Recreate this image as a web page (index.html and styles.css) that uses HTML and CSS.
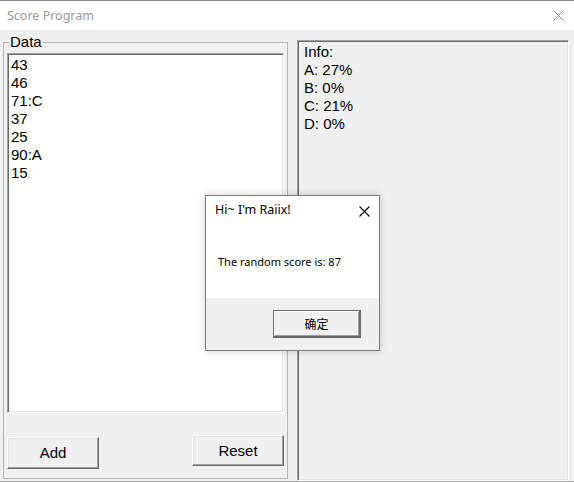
FILE: index.html
```html
<!DOCTYPE html>
<html>
<head>
<meta charset="utf-8">
<title>Score Program</title>
<link rel="stylesheet" href="styles.css">
</head>
<body>
<div class="window">
  <div class="titlebar">
    <span class="title">Score Program</span>
    <svg class="close" width="11" height="11" viewBox="0 0 11 11"><path d="M0.5 0.5 L10.5 10.5 M10.5 0.5 L0.5 10.5" stroke="#8a8a8a" stroke-width="1" fill="none"/></svg>
  </div>
  <div class="content">
    <fieldset class="group">
      <legend class="legend">Data</legend>
      <div class="listbox">
        <div>43</div>
        <div>46</div>
        <div>71:C</div>
        <div>37</div>
        <div>25</div>
        <div>90:A</div>
        <div>15</div>
      </div>
      <div class="buttons">
        <button class="btn btn-add">Add</button>
        <button class="btn btn-reset">Reset</button>
      </div>
    </fieldset>
    <div class="info">
      <div>Info:</div>
      <div>A: 27%</div>
      <div>B: 0%</div>
      <div>C: 21%</div>
      <div>D: 0%</div>
    </div>
  </div>

  <div class="dialog">
    <div class="dialog-main">
      <div class="dialog-title">
        <span>Hi~ I'm Raiix!</span>
        <svg class="dialog-close" width="11" height="11" viewBox="0 0 11 11"><path d="M0.5 0.5 L10.5 10.5 M10.5 0.5 L0.5 10.5" stroke="#000" stroke-width="1.1" fill="none"/></svg>
      </div>
      <div class="dialog-msg">The random score is: 87</div>
    </div>
    <div class="dialog-footer">
      <button class="ok-btn">确定</button>
    </div>
  </div>
</div>
</body>
</html>
```

FILE: styles.css
```css
html, body {
  margin: 0;
  padding: 0;
  width: 574px;
  height: 482px;
  overflow: hidden;
  background: #f0f0f0;
  font-family: "Noto Sans", "Noto Sans CJK SC", sans-serif;
  color: #000;
}

.window {
  position: relative;
  display: flex;
  flex-direction: column;
  height: 482px;
  box-sizing: border-box;
  border-bottom: 1px solid #a8a8a8;
}

.titlebar {
  height: 31px;
  box-sizing: border-box;
  border-top: 1px solid #8a8a8a;
  background: #fff;
  display: flex;
  align-items: center;
  justify-content: space-between;
  padding: 0 10px 0 7px;
}

.title {
  font-size: 12.5px;
  line-height: 17px;
  color: #999;
}

.close {
  display: block;
}

.content {
  flex: 1;
  display: flex;
  align-items: flex-start;
  gap: 9px;
  padding: 3px 0 0 3px;
}

.group {
  margin: 0;
  padding: 0 3px 0 3px;
  width: 285px;
  height: 446px;
  box-sizing: border-box;
  border: 1px solid #b4b4b4;
  min-width: 0;
}

.legend {
  padding: 0 1px;
  margin-left: 2px;
  font-family: "Liberation Sans", sans-serif;
  font-size: 15px;
  line-height: 18px;
}

.listbox {
  margin-top: 2px;
  height: 360px;
  box-sizing: border-box;
  background: #fff;
  border: 1px solid;
  border-color: #a0a0a0 #fff #fff #a0a0a0;
  box-shadow: inset 1px 1px 0 #696969, inset -1px -1px 0 #e3e3e3;
  padding: 2px 0 0 3px;
  font-family: "Liberation Sans", sans-serif;
  font-size: 15px;
  line-height: 18px;
}

.buttons {
  display: flex;
  justify-content: space-between;
  align-items: flex-start;
  margin-top: 22px;
}

.btn {
  width: 92px;
  height: 31px;
  box-sizing: border-box;
  margin: 0;
  padding: 0;
  background: #f0f0f0;
  border: 1px solid;
  border-color: #fff #696969 #696969 #fff;
  box-shadow: inset -1px -1px 0 #a0a0a0, inset 1px 1px 0 #e3e3e3;
  font-family: "Liberation Sans", sans-serif;
  font-size: 15px;
  line-height: 18px;
  color: #000;
}

.btn-add {
  margin-top: 2px;
  height: 32px;
}

.info {
  width: 272px;
  height: 441px;
  margin-top: 7px;
  box-sizing: border-box;
  border: 1px solid;
  border-color: #a0a0a0 #fff #fff #a0a0a0;
  box-shadow: inset 1px 1px 0 #696969, inset -1px -1px 0 #e3e3e3;
  padding: 2px 0 0 6px;
  font-family: "Liberation Sans", sans-serif;
  font-size: 15px;
  line-height: 18px;
}

.dialog {
  position: absolute;
  left: 205px;
  top: 195px;
  width: 175px;
  height: 156px;
  box-sizing: border-box;
  border: 1px solid #7a7a7a;
  background: #f0f0f0;
  display: flex;
  flex-direction: column;
  box-shadow: 0 0 8px rgba(0, 0, 0, 0.18);
}

.dialog-main {
  height: 102px;
  background: #fff;
}

.dialog-title {
  display: flex;
  justify-content: space-between;
  align-items: flex-start;
  padding: 5px 9px 0 9px;
  font-size: 12.5px;
  line-height: 17px;
}

.dialog-close {
  display: block;
  margin-top: 5px;
}

.dialog-msg {
  margin-top: 36px;
  padding-left: 12px;
  font-size: 11px;
  line-height: 15px;
}

.dialog-footer {
  flex: 1;
  display: flex;
  justify-content: flex-end;
  align-items: flex-start;
  padding: 12px 18px 0 0;
}

.ok-btn {
  width: 88px;
  height: 28px;
  box-sizing: border-box;
  margin: 0;
  padding: 0;
  background: #f0f0f0;
  border: 1px solid #6b6b6b;
  border-right-width: 2px;
  border-bottom-width: 2px;
  box-shadow: inset 1px 1px 0 #fff, inset -1px -1px 0 #a0a0a0;
  font-family: "Noto Sans CJK SC", sans-serif;
  font-size: 12px;
  line-height: 16px;
  color: #000;
}
```
